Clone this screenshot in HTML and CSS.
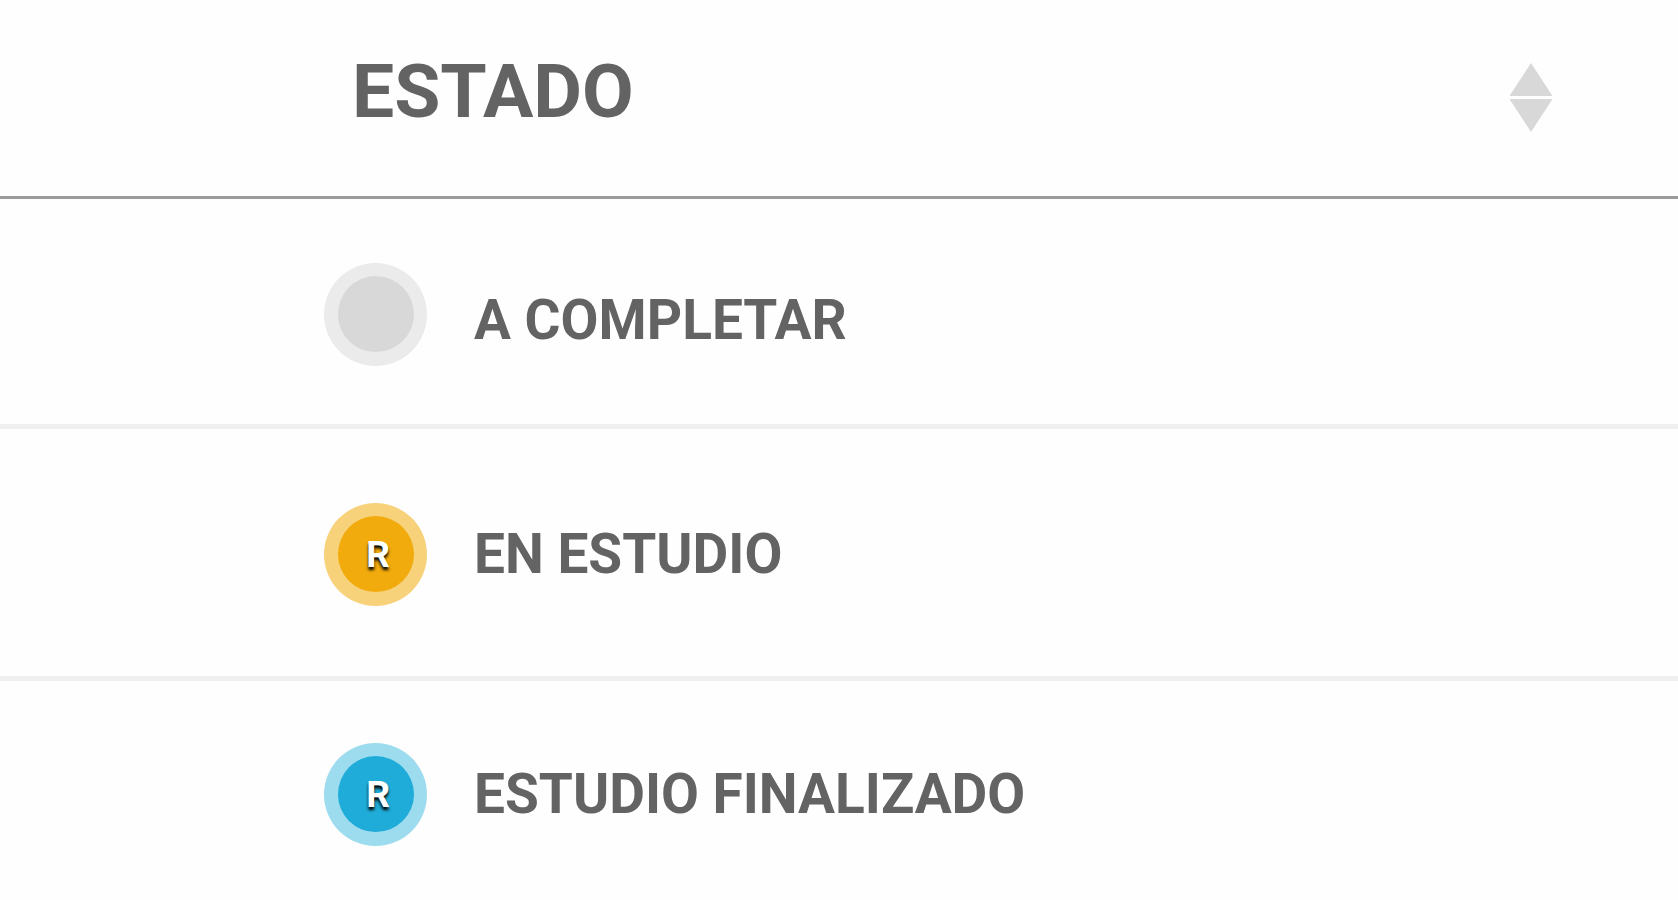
FILE: index.html
```html
<!DOCTYPE html>
<html lang="es">
<head>
<meta charset="utf-8">
<title>Estado</title>
<link rel="stylesheet" href="styles.css">
</head>
<body>
<table class="states">
<thead>
<tr><th scope="col"><div class="head"><span class="title">ESTADO</span>
<button class="sort" type="button" aria-label="Ordenar por estado"><svg class="sort-icon" viewBox="0 0 44 70"><path d="M22 0 43.500 33H.5zM.5 36H43.500L22 69z"/></svg></button></div></th></tr>
</thead>
<tbody>
<tr><td><div class="state pending"><span class="badge"></span><span class="label">A COMPLETAR</span></div></td></tr>
<tr><td><div class="state review"><span class="badge amber">R</span><span class="label">EN ESTUDIO</span></div></td></tr>
<tr><td><div class="state done"><span class="badge blue">R</span><span class="label">ESTUDIO FINALIZADO</span></div></td></tr>
</tbody>
</table>
</body>
</html>
```
FILE: styles.css
```css
body {
  margin: 0;
  background: #fefefe;
  color: #636363;
  font-family: Roboto, sans-serif;
  font-weight: 700;
}
.states {
  width: 100%;
  border-collapse: separate;
  border-spacing: 0;
}
th, td { padding: 0; }
th { border-bottom: 3px solid #9b9b9b; }
td { border-bottom: 5px solid #efefef; }
tr:last-child td { border-bottom: 0; }
.head {
  display: flex;
  justify-content: space-between;
  align-items: flex-end;
  padding: 49px 125px 63px 352px;
}
.title {
  font-size: 75px;
  line-height: 84px;
}
.sort {
  display: flex;
  padding: 0;
  border: 0;
  background: none;
}
.sort-icon {
  width: 44px;
  height: 70px;
  fill: #d8d8d8;
}
.state {
  display: flex;
  align-items: center;
  gap: 47px;
  padding: 64px 24px 58px 324px;
}
.review { padding-top: 74px; padding-bottom: 70px; }
.done { padding-top: 62px; padding-bottom: 48px; }
.badge {
  box-sizing: border-box;
  display: flex;
  justify-content: center;
  align-items: center;
  width: 103px;
  height: 103px;
  padding-left: 4px;
  border: 13px solid #ebebeb;
  border-width: 13px 13px 14px 14px;
  border-radius: 50%;
  background: #d8d8d8;
  color: #fff;
  font-size: 37px;
  text-shadow: 0 3px 3px #000;
}
.amber { border-color: #f7d27b; background: #f2ab0c; }
.blue { border-color: #9ddcee; background: #1facd8; }
.label {
  padding-bottom: 2px;
  font-size: 55px;
  line-height: 64px;
}
.pending .label { padding-top: 12px; }
```
